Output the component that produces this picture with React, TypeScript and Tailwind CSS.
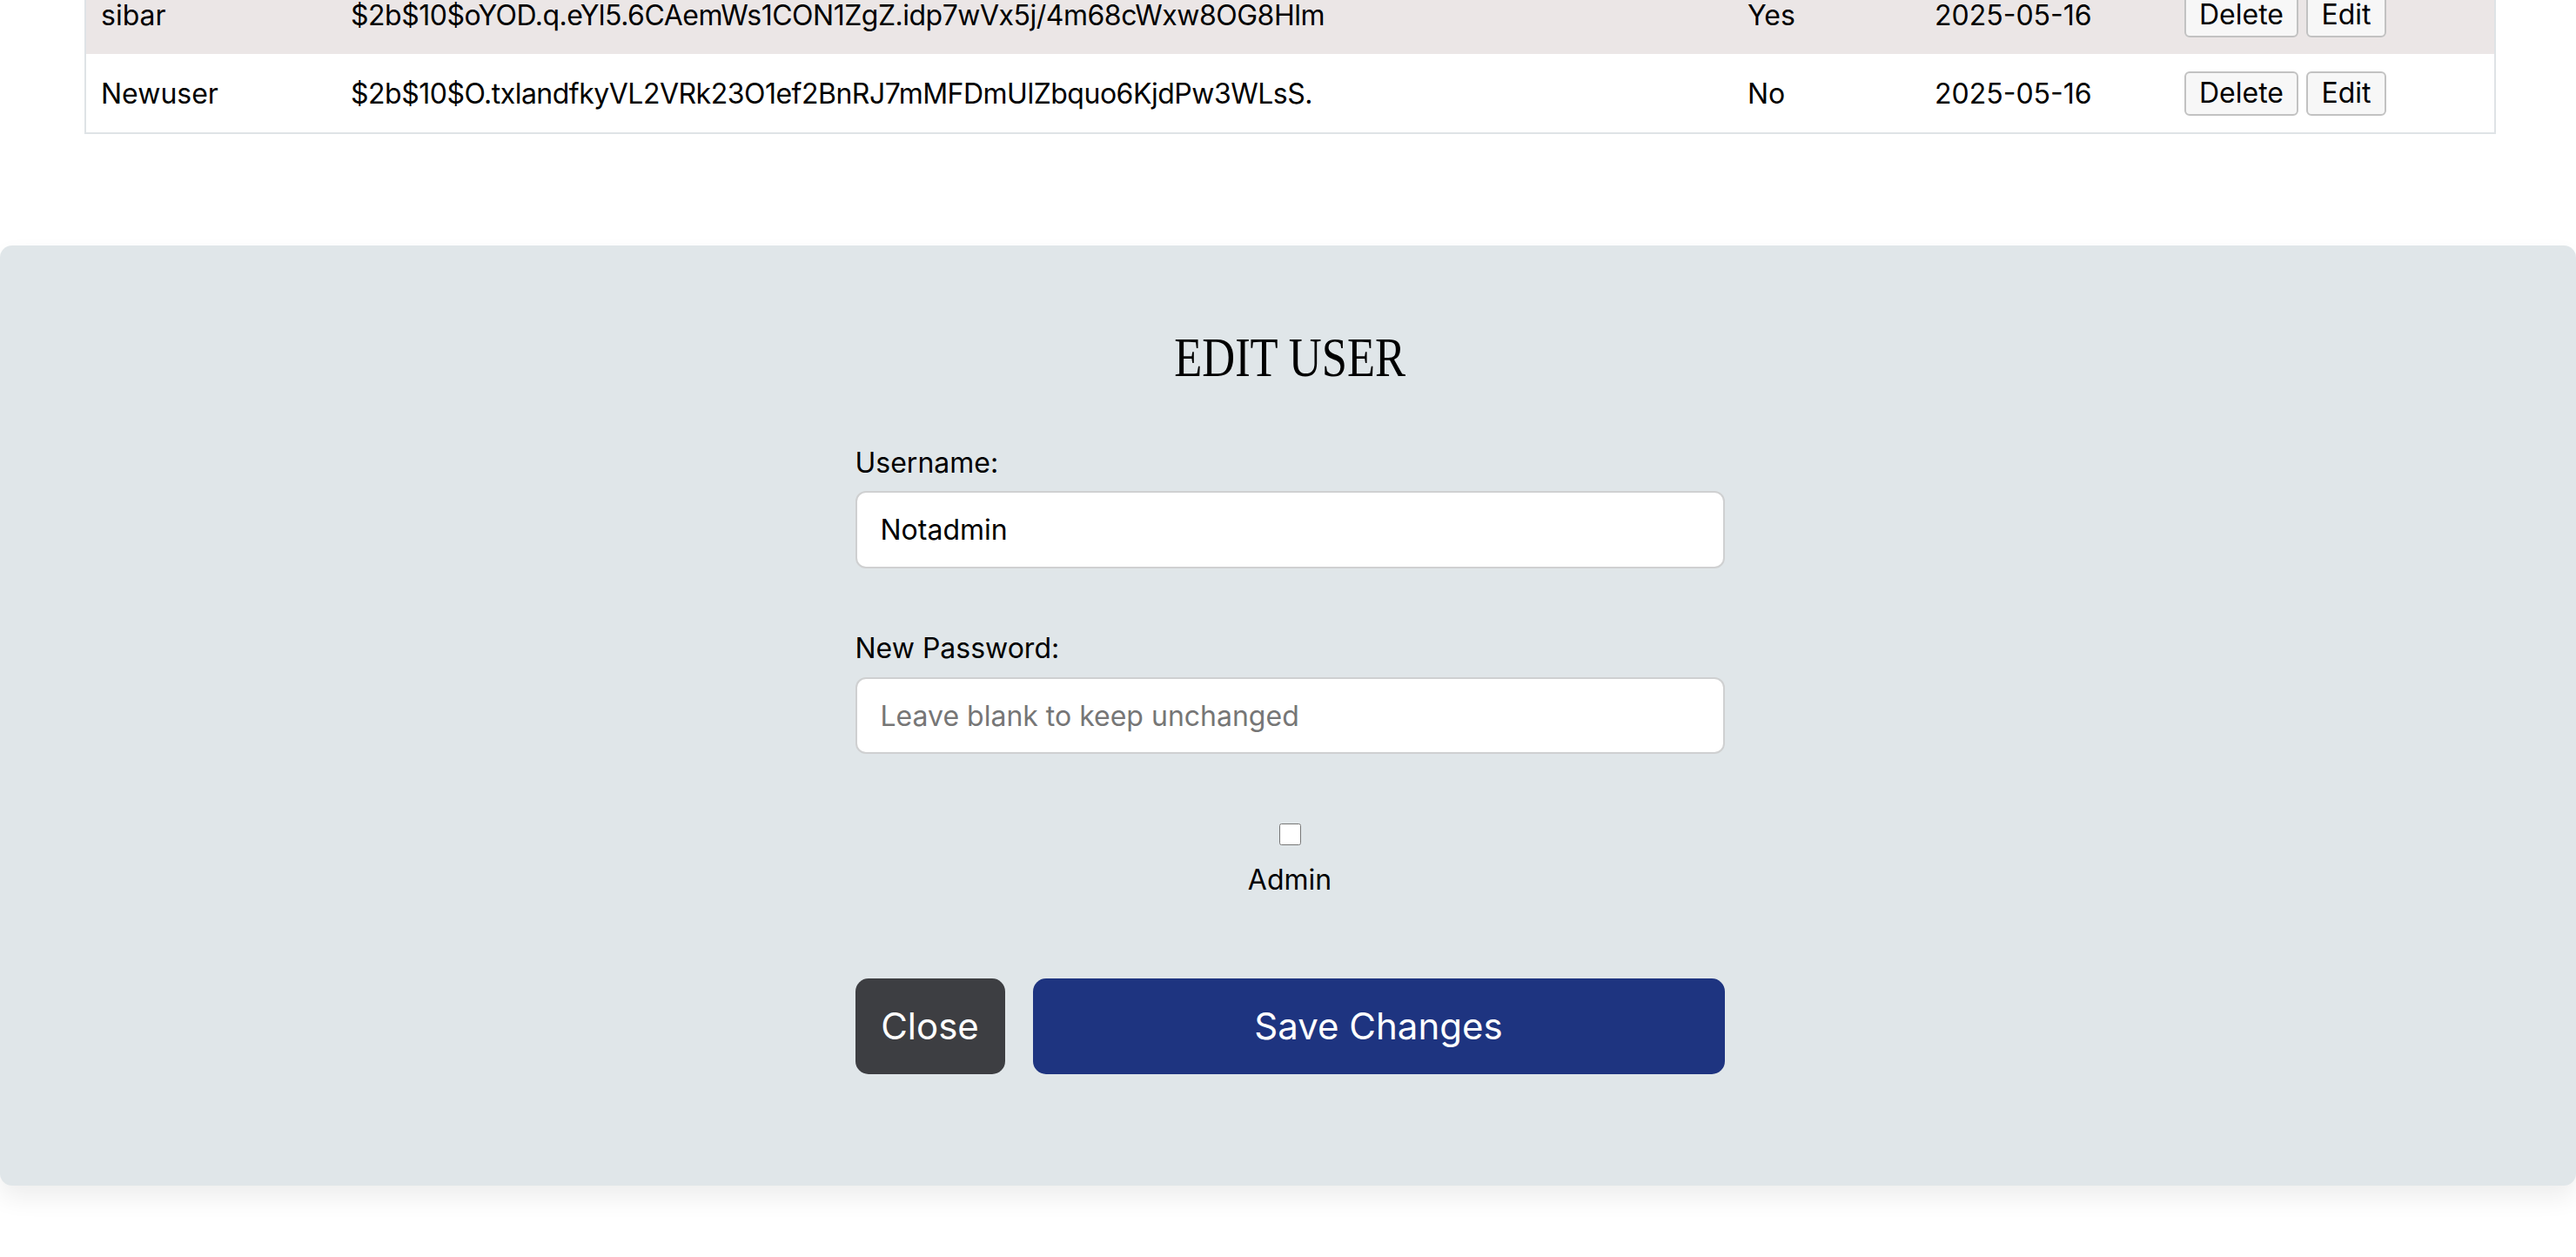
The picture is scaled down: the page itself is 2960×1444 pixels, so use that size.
import React from "react";

const rows = [
  {
    user: "sibar",
    hash: "$2b$10$oYOD.q.eYl5.6CAemWs1CON1ZgZ.idp7wVx5j/4m68cWxw8OG8Hlm",
    admin: "Yes",
    date: "2025-05-16",
    bg: "bg-[#ebe6e6]",
  },
  {
    user: "Newuser",
    hash: "$2b$10$O.txlandfkyVL2VRk23O1ef2BnRJ7mMFDmUlZbquo6KjdPw3WLsS.",
    admin: "No",
    date: "2025-05-16",
    bg: "bg-white",
  },
];

function SmallButton({ children, w }: { children: React.ReactNode; w: string }) {
  return (
    <button
      className={`${w} h-[51px] rounded-[6px] border-2 border-[#c2c2c2] bg-[#f7f7f7] text-[32px] leading-none text-black flex items-center justify-center`}
    >
      {children}
    </button>
  );
}

export default function App() {
  return (
    <div
      className="min-h-screen w-full bg-white text-black overflow-hidden"
      style={{ fontFamily: "Inter, 'Noto Sans', sans-serif" }}
    >
      <div className="ml-[97px] mr-[92px] mt-[-28px] border-x-2 border-b-2 border-[#dfe3e6]">
        {rows.map((r) => (
          <div
            key={r.user}
            className={`grid grid-cols-[287px_1605px_215px_287px_1fr] h-[90px] items-center text-[32px] leading-[39px] ${r.bg}`}
          >
            <div className="pl-[17px]">{r.user}</div>
            <div className="pl-[17px] whitespace-nowrap tracking-[-0.5px]">{r.hash}</div>
            <div className="pl-[17px]">{r.admin}</div>
            <div className="pl-[17px]">{r.date}</div>
            <div className="pl-[17px] flex gap-[9px] items-center">
              <SmallButton w="w-[131px]">Delete</SmallButton>
              <SmallButton w="w-[92px]">Edit</SmallButton>
            </div>
          </div>
        ))}
      </div>

      <div className="mt-[128px] bg-[#e0e6e9] rounded-[14px] shadow-[0_14px_28px_rgba(0,0,0,0.07)] pt-[97px] pb-[128px] pl-[4px] flex flex-col items-center">
        <h2
          className="text-[64px] leading-[64px] font-normal text-black scale-x-[0.82]"
          style={{ fontFamily: "'Liberation Serif', serif" }}
        >
          EDIT USER
        </h2>

        <div className="w-[999px] mt-[69px] flex flex-col text-[32px] leading-[39px]">
          <label className="mb-[13px]">Username:</label>
          <input
            className="h-[89px] rounded-[12px] border-2 border-[#cfd0d1] bg-white px-[27px] text-[32px] text-black outline-none"
            defaultValue="Notadmin"
          />

          <label className="mt-[72px] mb-[14px]">New Password:</label>
          <input
            type="password"
            className="h-[88px] rounded-[12px] border-2 border-[#cfd0d1] bg-white px-[27px] text-[32px] text-black outline-none placeholder:text-[#767676]"
            placeholder="Leave blank to keep unchanged"
          />

          <div className="mt-[80px] flex flex-col items-center">
            <input type="checkbox" className="w-[25px] h-[25px] m-0" />
            <span className="mt-[20px]">Admin</span>
          </div>

          <div className="mt-[94px] flex gap-[32px]">
            <button className="w-[172px] h-[110px] rounded-[15px] bg-[#3d3e42] text-white text-[42px] leading-none">
              Close
            </button>
            <button className="flex-1 h-[110px] rounded-[15px] bg-[#1e3480] text-white text-[42px] leading-none">
              Save Changes
            </button>
          </div>
        </div>
      </div>
    </div>
  );
}
